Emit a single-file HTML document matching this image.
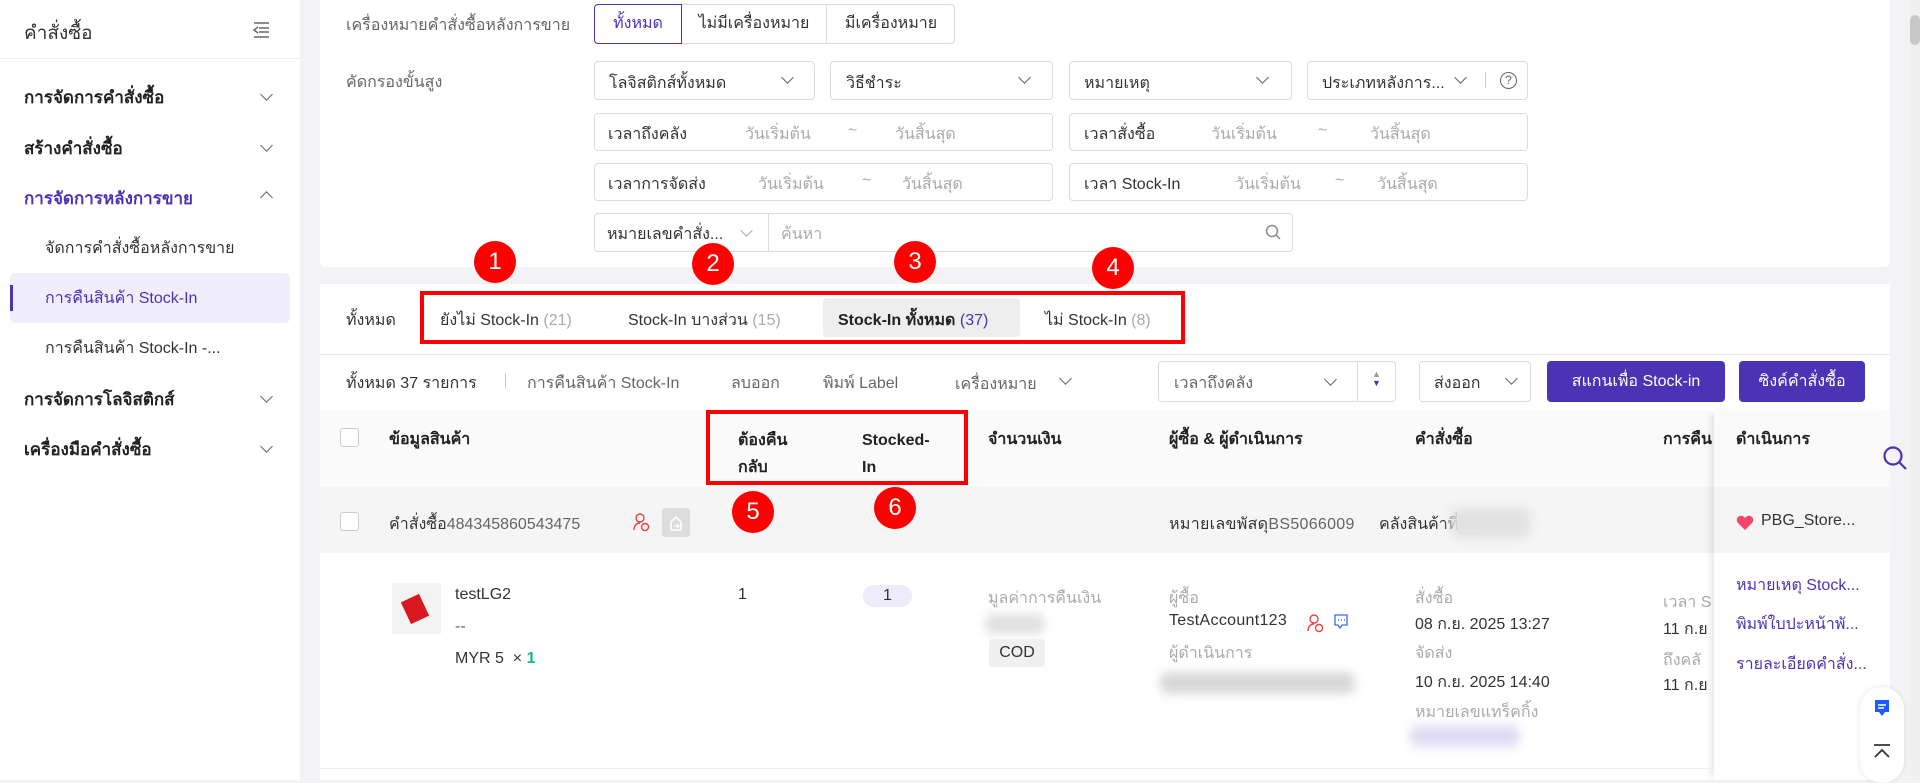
<!DOCTYPE html>
<html><head><meta charset="utf-8">
<style>
*{box-sizing:border-box;margin:0;padding:0}
body{width:1920px;height:780px;overflow:hidden;background:#f3f3f5;font-family:"Liberation Sans","Noto Sans CJK SC","WenQuanYi Zen Hei",sans-serif;font-size:16px;color:#333;position:relative}
.a{position:absolute;white-space:nowrap}
.side{position:absolute;left:0;top:0;width:300px;height:780px;background:#fff}
.card{position:absolute;background:#fff}
.box{position:absolute;border:1px solid #dcdcdf;border-radius:4px;background:#fff}
.g{color:#aaa}
.m{color:#666}
.chev{position:absolute;width:9px;height:9px;border-right:1.5px solid #666;border-bottom:1.5px solid #666;transform:rotate(45deg)}
.rc{position:absolute;width:42px;height:42px;border-radius:50%;background:#f00;color:#fff;font-size:24px;text-align:center;line-height:42px}
.btn{position:absolute;background:#4a33b5;color:#fff;border-radius:4px;text-align:center}
.cb{position:absolute;width:19px;height:19px;border:1px solid #ccc;border-radius:3px;background:#fff}
.pur{color:#4a33b5}
.blur{position:absolute;filter:blur(5px);border-radius:8px}
</style></head><body>
<div class="side">
 <div class="a" style="left:24px;top:18px;font-size:19px;color:#333">คำสั่งซื้อ</div>
 <svg class="a" style="left:252px;top:22px" width="18" height="16"><path d="M2 1h15M7 6h10M7 10h10M2 15h15M6 5l-4 3 4 3" stroke="#666" stroke-width="1.5" fill="none"/></svg>
 <div class="a" style="left:0;top:58px;width:300px;border-top:1px solid #eee"></div>
 <div class="a" style="left:24px;top:84px;font-weight:bold;color:#222;font-size:17px">การจัดการคำสั่งซื้อ</div><div class="chev" style="left:262px;top:90px;"></div>
 <div class="a" style="left:24px;top:135px;font-weight:bold;color:#222;font-size:17px">สร้างคำสั่งซื้อ</div><div class="chev" style="left:262px;top:141px"></div>
 <div class="a" style="left:24px;top:185px;font-weight:bold;color:#4a33b5;font-size:17px">การจัดการหลังการขาย</div><div class="chev" style="left:262px;top:193px;transform:rotate(225deg)"></div>
 <div class="a" style="left:45px;top:236px">จัดการคำสั่งซื้อหลังการขาย</div>
 <div class="a" style="left:10px;top:273px;width:280px;height:50px;background:#f0eefc;border-radius:5px"></div>
 <div class="a" style="left:10px;top:285px;width:3px;height:26px;background:#4a33b5"></div>
 <div class="a pur" style="left:45px;top:286px">การคืนสินค้า Stock-In</div>
 <div class="a" style="left:45px;top:336px">การคืนสินค้า Stock-In -...</div>
 <div class="a" style="left:24px;top:386px;font-weight:bold;color:#222;font-size:17px">การจัดการโลจิสติกส์</div><div class="chev" style="left:262px;top:392px"></div>
 <div class="a" style="left:24px;top:436px;font-weight:bold;color:#222;font-size:17px">เครื่องมือคำสั่งซื้อ</div><div class="chev" style="left:262px;top:442px"></div>
</div>

<div class="card" style="left:320px;top:0;width:1570px;height:267px;border-radius:0 0 6px 6px"></div>
<div class="a m" style="left:346px;top:13px">เครื่องหมายคำสั่งซื้อหลังการขาย</div>
<div class="box" style="left:594px;top:4px;width:361px;height:40px"></div>
<div class="a" style="left:594px;top:4px;width:88px;height:40px;border:1px solid #4a33b5;border-radius:4px 0 0 4px;text-align:center;line-height:38px;color:#4a33b5">ทั้งหมด</div>
<div class="a" style="left:682px;top:4px;width:145px;height:40px;line-height:40px;text-align:center;border-right:1px solid #dcdcdf">ไม่มีเครื่องหมาย</div>
<div class="a" style="left:827px;top:4px;width:128px;height:40px;line-height:40px;text-align:center">มีเครื่องหมาย</div>
<div class="a m" style="left:346px;top:70px">คัดกรองขั้นสูง</div>

<div class="box" style="left:594px;top:61px;width:221px;height:39px"></div><div class="a" style="left:609px;top:71px">โลจิสติกส์ทั้งหมด</div><div class="chev" style="left:783px;top:73px"></div>
<div class="box" style="left:830px;top:61px;width:223px;height:39px"></div><div class="a" style="left:846px;top:71px">วิธีชำระ</div><div class="chev" style="left:1020px;top:73px"></div>
<div class="box" style="left:1069px;top:61px;width:223px;height:39px"></div><div class="a" style="left:1084px;top:71px">หมายเหตุ</div><div class="chev" style="left:1258px;top:73px"></div>
<div class="box" style="left:1307px;top:61px;width:221px;height:39px"></div><div class="a" style="left:1322px;top:71px">ประเภทหลังการ...</div><div class="chev" style="left:1456px;top:73px"></div>
<div class="a" style="left:1485px;top:72px;height:16px;border-left:1px solid #ccc"></div>
<div class="a" style="left:1500px;top:72px;width:17px;height:17px;border:1.5px solid #666;border-radius:50%;font-size:12px;text-align:center;line-height:14px;color:#666">?</div>

<div class="box" style="left:594px;top:113px;width:459px;height:38px"></div>
<div class="a" style="left:608px;top:122px">เวลาถึงคลัง</div><div class="a g" style="left:745px;top:122px">วันเริ่มต้น</div><div class="a g" style="left:848px;top:122px">~</div><div class="a g" style="left:895px;top:122px">วันสิ้นสุด</div>
<div class="box" style="left:1069px;top:113px;width:459px;height:38px"></div>
<div class="a" style="left:1084px;top:122px">เวลาสั่งซื้อ</div><div class="a g" style="left:1211px;top:122px">วันเริ่มต้น</div><div class="a g" style="left:1318px;top:122px">~</div><div class="a g" style="left:1370px;top:122px">วันสิ้นสุด</div>
<div class="box" style="left:594px;top:163px;width:459px;height:38px"></div>
<div class="a" style="left:608px;top:172px">เวลาการจัดส่ง</div><div class="a g" style="left:758px;top:172px">วันเริ่มต้น</div><div class="a g" style="left:862px;top:172px">~</div><div class="a g" style="left:902px;top:172px">วันสิ้นสุด</div>
<div class="box" style="left:1069px;top:163px;width:459px;height:38px"></div>
<div class="a" style="left:1084px;top:172px">เวลา Stock-In</div><div class="a g" style="left:1235px;top:172px">วันเริ่มต้น</div><div class="a g" style="left:1335px;top:172px">~</div><div class="a g" style="left:1377px;top:172px">วันสิ้นสุด</div>
<div class="box" style="left:594px;top:213px;width:699px;height:39px"></div>
<div class="a" style="left:768px;top:213px;height:39px;border-left:1px solid #dcdcdf"></div>
<div class="a" style="left:607px;top:222px">หมายเลขคำสั่ง...</div><div class="chev" style="left:742px;top:226px;border-color:#aaa"></div>
<div class="a g" style="left:781px;top:222px">ค้นหา</div>
<svg class="a" style="left:1265px;top:224px" width="16" height="17"><circle cx="7" cy="7" r="5.5" stroke="#888" stroke-width="1.5" fill="none"/><path d="M11 11l4 4" stroke="#888" stroke-width="1.5"/></svg>

<div class="card" style="left:320px;top:284px;width:1570px;height:496px"></div>
<div class="a" style="left:346px;top:308px">ทั้งหมด</div>
<div class="a" style="left:440px;top:308px">ยังไม่ Stock-In <span class="g">(21)</span></div>
<div class="a" style="left:628px;top:308px">Stock-In บางส่วน <span class="g">(15)</span></div>
<div class="a" style="left:823px;top:298px;width:197px;height:39px;background:#eee;border-radius:4px"></div>
<div class="a" style="left:838px;top:308px;font-weight:bold;color:#222">Stock-In ทั้งหมด <span class="pur" style="font-weight:normal">(37)</span></div>
<div class="a" style="left:1045px;top:308px">ไม่ Stock-In <span class="g">(8)</span></div>
<div class="a" style="left:420px;top:291px;width:765px;height:53px;border:4px solid #f00"></div>
<div class="a" style="left:320px;top:354px;width:1570px;border-top:1px solid #e8e8e8"></div>

<div class="a" style="left:346px;top:371px">ทั้งหมด 37 รายการ</div>
<div class="a" style="left:505px;top:373px;height:16px;border-left:1px solid #ccc"></div>
<div class="a m" style="left:527px;top:371px">การคืนสินค้า Stock-In</div>
<div class="a m" style="left:731px;top:371px">ลบออก</div>
<div class="a m" style="left:823px;top:371px">พิมพ์ Label</div>
<div class="a m" style="left:955px;top:372px">เครื่องหมาย</div><div class="chev" style="left:1061px;top:374px"></div>
<div class="box" style="left:1158px;top:361px;width:238px;height:41px"></div>
<div class="a" style="left:1357px;top:361px;height:41px;border-left:1px solid #dcdcdf"></div>
<div class="a m" style="left:1174px;top:371px">เวลาถึงคลัง</div><div class="chev" style="left:1326px;top:375px"></div>
<div class="a" style="left:1372px;top:370px;font-size:9px;color:#999;line-height:9px">▲<br><span class="pur">▼</span></div>
<div class="box" style="left:1419px;top:361px;width:112px;height:41px"></div>
<div class="a" style="left:1434px;top:371px">ส่งออก</div><div class="chev" style="left:1507px;top:374px"></div>
<div class="btn" style="left:1547px;top:361px;width:178px;height:41px;line-height:41px">สแกนเพื่อ Stock-in</div>
<div class="btn" style="left:1739px;top:361px;width:126px;height:41px;line-height:41px">ซิงค์คำสั่งซื้อ</div>

<div class="a" style="left:320px;top:410px;width:1570px;height:77px;background:#fafafa"></div>
<div class="cb" style="left:340px;top:428px"></div>
<div class="a" style="left:389px;top:427px;font-weight:bold;color:#222">ข้อมูลสินค้า</div>
<div class="a" style="left:738px;top:427px;font-weight:bold;color:#222;line-height:27px">ต้องคืน<br>กลับ</div>
<div class="a" style="left:862px;top:427px;font-weight:bold;color:#222;line-height:27px">Stocked-<br>In</div>
<div class="a" style="left:988px;top:427px;font-weight:bold;color:#222">จำนวนเงิน</div>
<div class="a" style="left:1169px;top:427px;font-weight:bold;color:#222">ผู้ซื้อ &amp; ผู้ดำเนินการ</div>
<div class="a" style="left:1415px;top:427px;font-weight:bold;color:#222">คำสั่งซื้อ</div>
<div class="a" style="left:1663px;top:427px;font-weight:bold;color:#222">การคืน</div>
<div class="a" style="left:706px;top:410px;width:262px;height:75px;border:4px solid #f00"></div>

<div class="a" style="left:320px;top:487px;width:1570px;height:66px;background:#f5f5f5"></div>
<div class="cb" style="left:340px;top:512px"></div>
<div class="a" style="left:389px;top:512px">คำสั่งซื้อ<span class="m">484345860543475</span></div>
<svg class="a" style="left:632px;top:512px" width="18" height="20"><circle cx="8" cy="6" r="4" stroke="#f04040" stroke-width="1.4" fill="none"/><path d="M2 18c0-5 3-7 6-7" stroke="#f04040" stroke-width="1.4" fill="none"/><circle cx="13" cy="15" r="3.5" stroke="#f04040" stroke-width="1.4" fill="none"/></svg>
<div class="a" style="left:662px;top:508px;width:28px;height:29px;background:#ddd;border-radius:3px"></div>
<svg class="a" style="left:667px;top:513px" width="18" height="20"><path d="M4 9l5-5 5 5v8H4z" stroke="#fff" stroke-width="1.5" fill="none"/><path d="M7 13h5M10 11l2 2-2 2" stroke="#fff" stroke-width="1.3" fill="none"/></svg>
<div class="a" style="left:1169px;top:512px;letter-spacing:0.3px">หมายเลขพัสดุ<span class="m">BS5066009</span></div>
<div class="a" style="left:1379px;top:512px">คลังสินค้าที่รับ</div>
<div class="blur" style="left:1450px;top:508px;width:80px;height:30px;background:#e2e2e2"></div>

<div class="a" style="left:392px;top:583px;width:49px;height:51px;background:#f3f3f3"></div>
<div class="a" style="left:405px;top:597px;width:20px;height:24px;background:#d9191f;transform:rotate(-25deg)"></div>
<div class="a" style="left:455px;top:586px">testLG2</div>
<div class="a m" style="left:455px;top:618px">--</div>
<div class="a" style="left:455px;top:650px">MYR 5 &nbsp;× <span style="color:#19b580;font-weight:bold">1</span></div>
<div class="a" style="left:738px;top:586px">1</div>
<div class="a" style="left:863px;top:585px;width:49px;height:22px;background:#eeecfb;border-radius:11px;text-align:center;line-height:22px">1</div>
<div class="a g" style="left:988px;top:586px">มูลค่าการคืนเงิน</div>
<div class="blur" style="left:985px;top:614px;width:60px;height:20px;background:#e0e0e0"></div>
<div class="a" style="left:989px;top:639px;width:56px;height:28px;background:#f0f0f0;border-radius:3px;text-align:center;line-height:28px">COD</div>
<div class="a g" style="left:1169px;top:586px">ผู้ซื้อ</div>
<div class="a" style="left:1169px;top:612px;letter-spacing:0.3px">TestAccount123</div>
<svg class="a" style="left:1306px;top:613px" width="18" height="20"><circle cx="8" cy="6" r="4" stroke="#f04040" stroke-width="1.4" fill="none"/><path d="M2 18c0-5 3-7 6-7" stroke="#f04040" stroke-width="1.4" fill="none"/><circle cx="13" cy="15" r="3.5" stroke="#f04040" stroke-width="1.4" fill="none"/></svg>
<svg class="a" style="left:1334px;top:614px" width="14" height="16"><path d="M1 1h12v10H8l-2 3-2-3H1z" stroke="#3a6de0" stroke-width="1.3" fill="none"/><path d="M4 6h1M7 6h1M10 6h1" stroke="#3a6de0" stroke-width="1.5"/></svg>
<div class="a g" style="left:1169px;top:641px">ผู้ดำเนินการ</div>
<div class="blur" style="left:1160px;top:672px;width:195px;height:22px;background:#d8d8d8"></div>
<div class="a g" style="left:1415px;top:586px">สั่งซื้อ</div>
<div class="a" style="left:1415px;top:612px">08 ก.ย. 2025 13:27</div>
<div class="a g" style="left:1415px;top:641px">จัดส่ง</div>
<div class="a" style="left:1415px;top:670px">10 ก.ย. 2025 14:40</div>
<div class="a g" style="left:1415px;top:700px">หมายเลขแทร็คกิ้ง</div>
<div class="blur" style="left:1410px;top:725px;width:110px;height:22px;background:#e0dcf4"></div>
<div class="a g" style="left:1663px;top:590px">เวลา S</div>
<div class="a" style="left:1663px;top:617px">11 ก.ย</div>
<div class="a g" style="left:1663px;top:648px">ถึงคลั</div>
<div class="a" style="left:1663px;top:673px">11 ก.ย</div>

<div class="a" style="left:1714px;top:410px;width:176px;height:370px;background:#fff;box-shadow:-6px 0 8px -4px rgba(0,0,0,0.12)"></div>
<div class="a" style="left:1714px;top:410px;width:176px;height:77px;background:#fafafa"></div>
<div class="a" style="left:1714px;top:487px;width:176px;height:66px;background:#f5f5f5"></div>
<div class="a" style="left:1736px;top:427px;font-weight:bold;color:#222">ดำเนินการ</div>
<svg class="a" style="left:1736px;top:514px" width="18" height="17"><path d="M9 16L2 9a4 4 0 016-6l1 1 1-1a4 4 0 016 6z" fill="#f5456b"/></svg>
<div class="a" style="left:1761px;top:512px">PBG_Store...</div>
<div class="a pur" style="left:1736px;top:573px">หมายเหตุ Stock...</div>
<div class="a pur" style="left:1736px;top:612px">พิมพ์ใบปะหน้าพั...</div>
<div class="a pur" style="left:1736px;top:652px">รายละเอียดคำสั่ง...</div>
<div class="a" style="left:320px;top:768px;width:1394px;border-top:1px solid #eee"></div>

<div class="a" style="left:1890px;top:0;width:20px;height:780px;background:#f3f3f5"></div>
<div class="a" style="left:1910px;top:0;width:10px;height:780px;background:#f0f0f0"></div>
<div class="a" style="left:1910px;top:15px;width:10px;height:30px;background:#c8c8c8;border-radius:5px"></div>
<svg class="a" style="left:1882px;top:445px" width="28" height="28"><circle cx="11" cy="11" r="8.5" stroke="#4a33b5" stroke-width="2.2" fill="none"/><path d="M17 17l7 7" stroke="#4a33b5" stroke-width="2.2"/></svg>
<div class="a" style="left:1860px;top:687px;width:44px;height:96px;background:#fff;border-radius:22px;box-shadow:0 0 6px rgba(0,0,0,0.1)"></div>
<svg class="a" style="left:1872px;top:697px" width="20" height="22"><path d="M3 3h14v12h-4l-3 4-3-4H3z" fill="#1a5cff"/><path d="M6 8h8M6 11h6" stroke="#fff" stroke-width="1.6"/></svg>
<svg class="a" style="left:1872px;top:743px" width="20" height="16"><path d="M2 2h16M3 14l7-7 7 7" stroke="#333" stroke-width="1.8" fill="none"/></svg>

<div class="rc" style="left:474px;top:241px">1</div>
<div class="rc" style="left:692px;top:243px">2</div>
<div class="rc" style="left:894px;top:241px">3</div>
<div class="rc" style="left:1092px;top:247px">4</div>
<div class="rc" style="left:732px;top:491px">5</div>
<div class="rc" style="left:874px;top:487px">6</div>
</body></html>
